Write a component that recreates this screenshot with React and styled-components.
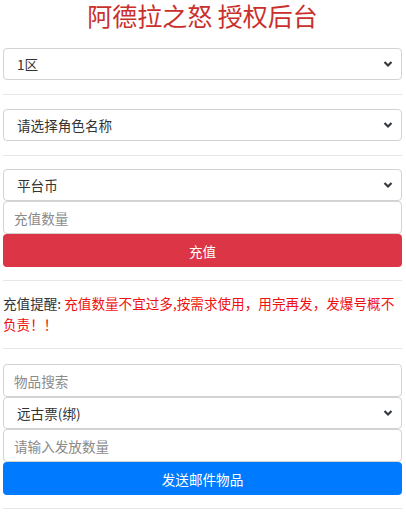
import React from "react";
import styled, { createGlobalStyle } from "styled-components";

const GlobalStyle = createGlobalStyle`
  html, body {
    margin: 0;
    background: #fff;
  }
  body {
    font-family: "Noto Sans CJK SC", "Noto Sans", sans-serif;
    font-size: 13.6px;
    color: #333;
  }
  * { box-sizing: border-box; }
`;

const Page = styled.div`
  padding: 0 4px 0 3px;
  display: flex;
  flex-direction: column;
`;

const Title = styled.h2`
  margin: 0 0 18px;
  text-align: center;
  font-size: 25px;
  line-height: 30px;
  font-weight: 400;
  color: #c9302c;
`;

const Divider = styled.hr`
  margin: ${(p) => p.$top ?? 14}px 0 ${(p) => p.$bottom ?? 14}px;
  border: 0;
  border-top: 1px solid #e6e6e6;
  height: 0;
`;

const Stack = styled.div`
  display: flex;
  flex-direction: column;
`;

const SelectWrap = styled.div`
  position: relative;
  height: 32px;
`;

const Select = styled.select`
  appearance: none;
  -webkit-appearance: none;
  width: 100%;
  height: 100%;
  border: 1px solid #d3d3d3;
  border-radius: 4px;
  background: #fff;
  padding: 0 30px 0 13px;
  font-family: inherit;
  font-size: 13.6px;
  color: #333;
  outline: none;
`;

const Chevron = styled.svg`
  position: absolute;
  right: 9px;
  top: 50%;
  margin-top: -4px;
  width: 10px;
  height: 8px;
  pointer-events: none;
`;

const Input = styled.input`
  display: block;
  width: 100%;
  height: 33px;
  margin: 0;
  border: 1px solid #d3d3d3;
  border-radius: 4px;
  padding: 0 10px;
  font-family: inherit;
  font-size: 13.6px;
  color: #333;
  outline: none;
  &::placeholder {
    color: #8a8a8a;
  }
`;

const Button = styled.button`
  display: block;
  width: 100%;
  height: 33px;
  margin: 0;
  border: 0;
  border-radius: 4px;
  background: ${(p) => (p.$variant === "danger" ? "#dc3545" : "#007bff")};
  color: #fff;
  font-family: inherit;
  font-size: 13.6px;
  cursor: pointer;
`;

const Notice = styled.p`
  margin: 12px 0 0;
  line-height: 21px;
  color: #333;
`;

const Warn = styled.span`
  color: #ee1111;
`;

function Dropdown({ value, options }) {
  return (
    <SelectWrap>
      <Select defaultValue={value}>
        {options.map((o) => (
          <option key={o}>{o}</option>
        ))}
      </Select>
      <Chevron viewBox="0 0 10 8">
        <path d="M1.5 2l3.5 3.5L8.5 2" fill="none" stroke="#343a40" strokeWidth="2.2" />
      </Chevron>
    </SelectWrap>
  );
}

export default function App() {
  return (
    <>
      <GlobalStyle />
      <Page>
        <Title>阿德拉之怒 授权后台</Title>

        <Dropdown value="1区" options={["1区", "2区", "3区"]} />
        <Divider />

        <Dropdown value="请选择角色名称" options={["请选择角色名称"]} />
        <Divider $bottom={13} />

        <Stack>
          <Dropdown value="平台币" options={["平台币"]} />
          <Input placeholder="充值数量" />
          <Button $variant="danger">充值</Button>
        </Stack>
        <Divider $top={13} $bottom={0} />

        <Notice>
          充值提醒: <Warn>充值数量不宜过多,按需求使用，用完再发，发爆号概不负责！！</Warn>
        </Notice>
        <Divider $top={13} $bottom={15} />

        <Stack>
          <Input placeholder="物品搜索" />
          <Dropdown value="远古票(绑)" options={["远古票(绑)"]} />
          <Input placeholder="请输入发放数量" />
          <Button>发送邮件物品</Button>
        </Stack>
        <Divider $top={13} />
      </Page>
    </>
  );
}
